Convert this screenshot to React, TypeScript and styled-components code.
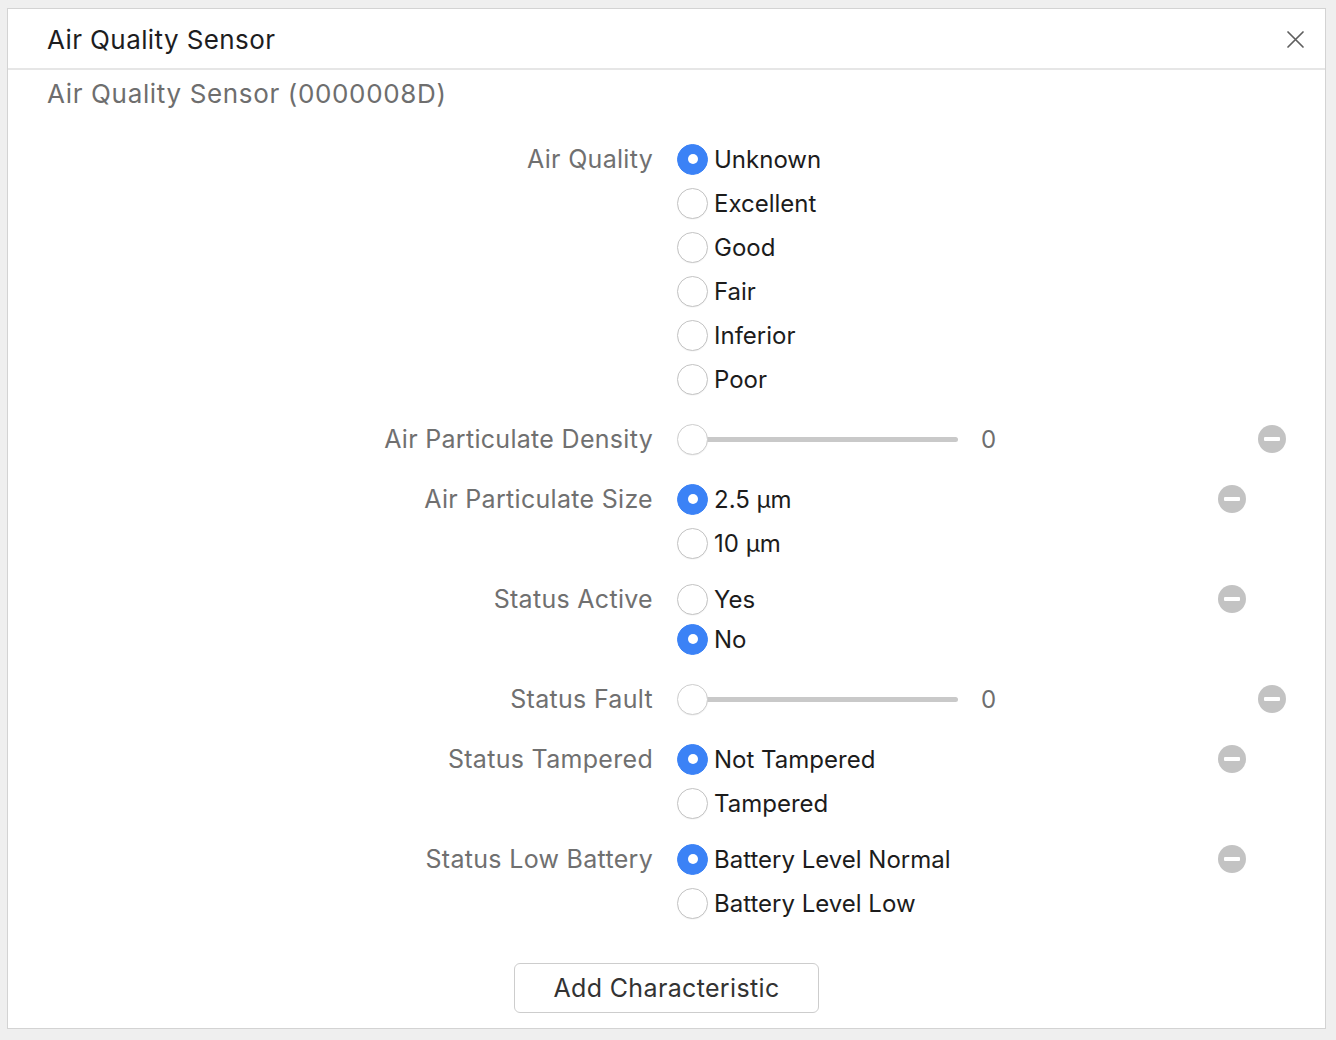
import React from "react";
import styled, { createGlobalStyle } from "styled-components";

const GlobalStyle = createGlobalStyle`
  html, body { margin: 0; padding: 0; background: #efefef; }
  body { font-family: Inter, "Noto Sans", "Liberation Sans", sans-serif; -webkit-font-smoothing: antialiased; }
  * { box-sizing: border-box; }
`;

const Page = styled.div`
  padding: 8px 10px 10px 7px;
`;

const Panel = styled.div`
  width: 1319px;
  background: #ffffff;
  border: 1px solid #d3d3d3;
  display: flex;
  flex-direction: column;
`;

const Header = styled.div`
  height: 61px;
  display: flex;
  align-items: center;
  justify-content: space-between;
  padding: 1px 20px 0 39px;
  border-bottom: 2px solid #e6e6e6;
`;

const Title = styled.h1`
  margin: 0;
  font-size: 26px;
  font-weight: 400;
  color: #1d1d1f;
  letter-spacing: 0.4px;
`;

const CloseButton = styled.button`
  border: none;
  background: none;
  padding: 0;
  width: 20px;
  height: 20px;
  display: flex;
  align-items: center;
  justify-content: center;
  cursor: pointer;
`;

const Subtitle = styled.div`
  padding: 8px 0 0 39px;
  font-size: 26px;
  color: #6e6e6e;
  line-height: 32px;
  letter-spacing: 0.65px;
`;

const Form = styled.div`
  display: flex;
  flex-direction: column;
  gap: 12px;
  margin-top: 27px;
`;

const Field = styled.div<{ $wide?: boolean; $pad?: number }>`
  display: flex;
  align-items: flex-start;
  padding: ${(p) => p.$pad ?? 0}px ${(p) => (p.$wide ? 39 : 79)}px ${(p) => p.$pad ?? 0}px 0;
`;

const Label = styled.div<{ $h: number }>`
  width: 645px;
  flex-shrink: 0;
  text-align: right;
  font-size: 25px;
  letter-spacing: 0.3px;
  color: #707070;
  line-height: ${(p) => p.$h}px;
`;

const Controls = styled.div`
  flex: 1;
  margin-left: 24px;
  display: flex;
  flex-direction: column;
`;

const Option = styled.label<{ $h: number }>`
  display: flex;
  align-items: center;
  height: ${(p) => p.$h}px;
  font-size: 24px;
  color: #1c1c1c;
  gap: 6px;
  cursor: pointer;
`;

const RadioDot = styled.span<{ $checked: boolean }>`
  width: 31px;
  height: 31px;
  border-radius: 50%;
  flex-shrink: 0;
  display: flex;
  align-items: center;
  justify-content: center;
  background: ${(p) => (p.$checked ? "#3b82f6" : "#ffffff")};
  border: 1px solid ${(p) => (p.$checked ? "#3b82f6" : "#c4c4c4")};
  box-shadow: ${(p) => (p.$checked ? "none" : "0 0.5px 1px rgba(0,0,0,0.06)")};
  &::after {
    content: "";
    width: 10px;
    height: 10px;
    border-radius: 50%;
    background: #ffffff;
    display: ${(p) => (p.$checked ? "block" : "none")};
  }
`;

const SliderRow = styled.div`
  height: 52px;
  display: flex;
  align-items: center;
`;

const SliderTrack = styled.div`
  position: relative;
  width: 281px;
  height: 30px;
  display: flex;
  align-items: center;
`;

const TrackLine = styled.div`
  margin-left: 15px;
  flex: 1;
  height: 5px;
  border-radius: 3px;
  background: #c9c9c9;
`;

const Thumb = styled.span`
  position: absolute;
  left: 0;
  top: 0;
  width: 31px;
  height: 31px;
  border-radius: 50%;
  background: #ffffff;
  border: 1px solid #cfcfcf;
  box-shadow: 0 0.5px 1px rgba(0, 0, 0, 0.08);
`;

const SliderValue = styled.span`
  margin-left: 23px;
  font-size: 24px;
  color: #6e6e6e;
`;

const RemoveButton = styled.button<{ $h: number }>`
  margin-top: ${(p) => (p.$h - 28) / 2}px;
  width: 28px;
  height: 28px;
  border-radius: 50%;
  border: none;
  padding: 0;
  background: #c3c3c3;
  display: flex;
  align-items: center;
  justify-content: center;
  flex-shrink: 0;
  cursor: pointer;
  &::after {
    content: "";
    width: 16px;
    height: 4px;
    border-radius: 1px;
    background: #ffffff;
  }
`;

const Footer = styled.div`
  display: flex;
  justify-content: center;
  padding: 38px 0 15px;
`;

const AddButton = styled.button`
  width: 305px;
  height: 50px;
  border: 1px solid #cdcdcd;
  border-radius: 6px;
  background: #ffffff;
  font-family: inherit;
  font-size: 25px;
  letter-spacing: 0.35px;
  color: #333333;
  cursor: pointer;
`;

type RadioField = {
  kind: "radio";
  label: string;
  options: string[];
  selected: number;
  optH?: number;
  pad?: number;
  removable?: boolean;
};
type SliderField = { kind: "slider"; label: string; value: number };
type FieldDef = RadioField | SliderField;

const fields: FieldDef[] = [
  {
    kind: "radio",
    label: "Air Quality",
    options: ["Unknown", "Excellent", "Good", "Fair", "Inferior", "Poor"],
    selected: 0,
    removable: false,
  },
  { kind: "slider", label: "Air Particulate Density", value: 0 },
  { kind: "radio", label: "Air Particulate Size", options: ["2.5 µm", "10 µm"], selected: 0, removable: true },
  { kind: "radio", label: "Status Active", options: ["Yes", "No"], selected: 1, optH: 40, pad: 2, removable: true },
  { kind: "slider", label: "Status Fault", value: 0 },
  { kind: "radio", label: "Status Tampered", options: ["Not Tampered", "Tampered"], selected: 0, removable: true },
  {
    kind: "radio",
    label: "Status Low Battery",
    options: ["Battery Level Normal", "Battery Level Low"],
    selected: 0,
    removable: true,
  },
];

const CloseIcon = () => (
  <svg width="19" height="19" viewBox="0 0 19 19" fill="none">
    <path d="M2 2L17 17M17 2L2 17" stroke="#5f5f5f" strokeWidth="1.7" strokeLinecap="round" />
  </svg>
);

export default function App() {
  return (
    <>
      <GlobalStyle />
      <Page>
        <Panel>
          <Header>
            <Title>Air Quality Sensor</Title>
            <CloseButton aria-label="Close">
              <CloseIcon />
            </CloseButton>
          </Header>
          <Subtitle>Air Quality Sensor (0000008D)</Subtitle>
          <Form>
            {fields.map((f) => {
              if (f.kind === "slider") {
                return (
                  <Field key={f.label} $wide>
                    <Label $h={52}>{f.label}</Label>
                    <Controls>
                      <SliderRow>
                        <SliderTrack>
                          <TrackLine />
                          <Thumb />
                        </SliderTrack>
                        <SliderValue>{f.value}</SliderValue>
                      </SliderRow>
                    </Controls>
                    <RemoveButton $h={52} aria-label="Remove" />
                  </Field>
                );
              }
              const h = f.optH ?? 44;
              return (
                <Field key={f.label} $pad={f.pad}>
                  <Label $h={h}>{f.label}</Label>
                  <Controls>
                    {f.options.map((o, i) => (
                      <Option key={o} $h={h}>
                        <RadioDot $checked={i === f.selected} />
                        {o}
                      </Option>
                    ))}
                  </Controls>
                  {f.removable && <RemoveButton $h={h} aria-label="Remove" />}
                </Field>
              );
            })}
          </Form>
          <Footer>
            <AddButton>Add Characteristic</AddButton>
          </Footer>
        </Panel>
      </Page>
    </>
  );
}
